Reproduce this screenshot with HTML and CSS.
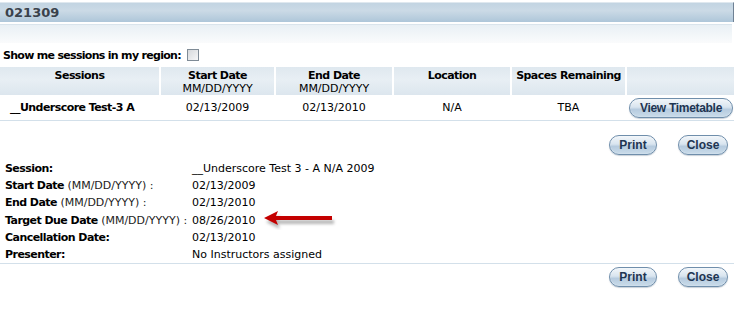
FILE: index.html
```html
<!DOCTYPE html>
<html>
<head>
<meta charset="utf-8">
<link rel="stylesheet" href="styles.css">
</head>
<body>
<div class="page">
  <div class="titlebar"><span class="title">021309</span></div>
  <div class="fade"></div>
  <div class="region">
    <span class="region-label">Show me sessions in my region:</span>
    <span class="chk"></span>
  </div>
  <table class="sessions">
    <colgroup>
      <col class="c1"><col class="c2"><col class="c3"><col class="c4"><col class="c5"><col class="c6">
    </colgroup>
    <thead>
      <tr>
        <th>Sessions</th>
        <th>Start Date<br><span class="fmt">MM/DD/YYYY</span></th>
        <th>End Date<br><span class="fmt">MM/DD/YYYY</span></th>
        <th>Location</th>
        <th>Spaces Remaining</th>
        <th></th>
      </tr>
    </thead>
    <tbody>
      <tr>
        <td class="name">__Underscore Test-3 A</td>
        <td>02/13/2009</td>
        <td>02/13/2010</td>
        <td>N/A</td>
        <td>TBA</td>
        <td class="btncell"><span class="btn wide">View Timetable</span></td>
      </tr>
    </tbody>
  </table>
  <div class="actions top"><span class="btn print">Print</span><span class="btn close">Close</span></div>
  <div class="details">
    <div class="lbl"><b>Session:</b></div><div class="val">__Underscore Test 3 - A N/A 2009</div>
    <div class="lbl"><b>Start Date</b> (MM/DD/YYYY) :</div><div class="val">02/13/2009</div>
    <div class="lbl"><b>End Date</b> (MM/DD/YYYY) :</div><div class="val">02/13/2010</div>
    <div class="lbl"><b>Target Due Date</b> (MM/DD/YYYY) :</div><div class="val">08/26/2010</div>
    <div class="lbl"><b>Cancellation Date:</b></div><div class="val">02/13/2010</div>
    <div class="lbl"><b>Presenter:</b></div><div class="val">No Instructors assigned</div>
  </div>
  <div class="actions bottom"><span class="btn print">Print</span><span class="btn close">Close</span></div>
  <svg class="arrow" width="80" height="20" viewBox="0 0 80 20">
    <defs>
      <filter id="sh" x="-20%" y="-50%" width="140%" height="200%">
        <feGaussianBlur stdDeviation="1.5"/>
      </filter>
    </defs>
    <g fill="#9a9a9a" opacity="0.7" filter="url(#sh)" transform="translate(2,4)">
      <polygon points="0,8 14,1 12,6 68,6 68,10 12,10 14,15"/>
    </g>
    <g fill="#c40000">
      <polygon points="0,8 14,1 12,6 68,6 68,10 12,10 14,15"/>
    </g>
  </svg>
</div>
</body>
</html>
```
FILE: styles.css
```css
html, body {
  margin: 0;
  padding: 0;
  background: #fff;
}
.page {
  position: relative;
  width: 734px;
  height: 310px;
  font-family: "DejaVu Sans", Verdana, sans-serif;
  font-size: 11px;
  color: #000;
  overflow: hidden;
}
b, .region-label, .sessions th, .sessions td.name {
  font-weight: bold;
  letter-spacing: -0.55px;
}
.region-label { letter-spacing: -0.7px; }
.titlebar {
  margin-top: 2px;
  height: 20px;
  width: 734px;
  border-top: 1px solid #dfe8ef;
  background: linear-gradient(#c2d4e2 0%, #cbdae6 40%, #aec6d9 100%);
  border-right: 1px solid #6f8194;
  display: flex;
  align-items: center;
  box-sizing: border-box;
}
.title {
  padding-left: 5px;
  font-weight: bold;
  font-size: 13px;
  color: #3a424c;
}
.fade {
  margin-top: 2px;
  height: 18px;
  width: 732px;
  border-top: 1px solid #d9e4ec;
  background: linear-gradient(#e9f0f5, #f5f8fa 70%, #fafbfc);
}
.region {
  margin-top: 5px;
  height: 14px;
  display: flex;
  align-items: center;
  padding-left: 3px;
  gap: 6px;
}
.chk {
  width: 10px;
  height: 10px;
  border: 1px solid #7f8b96;
  background: linear-gradient(135deg, #d6d9dc, #f6f7f8);
}
.sessions {
  margin-top: 5px;
  width: 734px;
  border-collapse: collapse;
  table-layout: fixed;
}
.c1 { width: 160px; }
.c2 { width: 115px; }
.c3 { width: 118px; }
.c4 { width: 118px; }
.c5 { width: 115px; }
.c6 { width: 108px; }
.sessions th {
  height: 26px;
  padding: 0;
  background: linear-gradient(#dfe8ef, #e8eff4 45%, #dce6ee);
  border-left: 2px solid #fff;
  vertical-align: top;
  padding-top: 2px;
  line-height: 13px;
  box-sizing: border-box;
  white-space: nowrap;
}
.sessions th:first-child { border-left: 0; }
.fmt {
  font-weight: normal;
  letter-spacing: 0;
}
.sessions td {
  height: 25px;
  padding: 0;
  text-align: center;
  border-bottom: 1px solid #d3e0ea;
}
.sessions td.name {
  text-align: left;
  padding-left: 10px;
}
.sessions td.btncell {
  text-align: right;
  padding-right: 1px;
}
.btn {
  display: inline-flex;
  align-items: center;
  justify-content: center;
  height: 18px;
  border: 1px solid #6f8eab;
  border-radius: 10px;
  background: linear-gradient(#f2f6fa 0%, #d9e5ef 45%, #b6cbdf 58%, #cadcea 100%);
  font-family: "Liberation Sans", Arial, sans-serif;
  font-size: 12px;
  font-weight: bold;
  color: #1e3552;
  box-shadow: inset 0 0 1px #ffffff, 0 1px 1px rgba(120,140,160,0.4);
}
.btn.wide { width: 102px; letter-spacing: -0.3px; }
.btn.print { width: 46px; }
.btn.close { width: 48px; }
.actions {
  display: flex;
  justify-content: flex-end;
  gap: 21px;
  padding-right: 6px;
}
.actions.top {
  margin-top: 14px;
}
.details {
  margin-top: 5px;
  display: grid;
  grid-template-columns: 187px auto;
  padding-left: 5px;
  line-height: 17.2px;
  border-bottom: 1px solid #d3e0ea;
  padding-bottom: 0;
  white-space: nowrap;
}
.lbl { color: #222; }
.lbl b { color: #000; }
.actions.bottom {
  margin-top: 3px;
}
.arrow {
  position: absolute;
  left: 264px;
  top: 210px;
}
```
